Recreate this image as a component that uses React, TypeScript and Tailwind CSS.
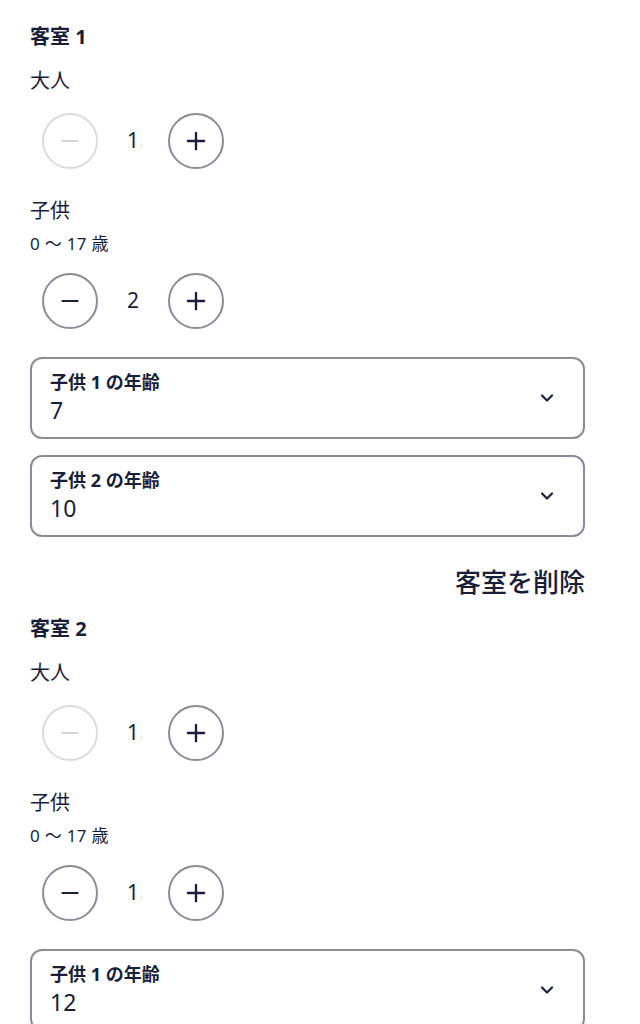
import { Minus, Plus, ChevronDown } from 'lucide-react';

type Room = { id: number; adults: number; children: number[] };

const rooms: Room[] = [
  { id: 1, adults: 1, children: [7, 10] },
  { id: 2, adults: 1, children: [12] },
];

function Stepper({ value, min }: { value: number; min: number }) {
  const disabled = value <= min;
  return (
    <div className="flex items-center pl-[12px] h-[56px]">
      <button
        className={
          disabled
            ? 'w-[56px] h-[56px] rounded-full border-2 border-[#dcdcde] flex items-center justify-center text-[#c9c9cd]'
            : 'w-[56px] h-[56px] rounded-full border-2 border-[#8b8c98] flex items-center justify-center text-[#191e3b]'
        }
      >
        <Minus size={26} strokeWidth={disabled ? 1.6 : 2} />
      </button>
      <span className="w-[70px] text-center text-[21px] text-[#191e3b]">{value}</span>
      <button className="w-[56px] h-[56px] rounded-full border-2 border-[#8b8c98] flex items-center justify-center text-[#191e3b]">
        <Plus size={28} strokeWidth={2} />
      </button>
    </div>
  );
}

function AgeSelect({ index, age }: { index: number; age: number }) {
  return (
    <div className="h-[82px] rounded-[12px] border-2 border-[#8b8c98] flex items-center justify-between pl-[18px] pr-[26px]">
      <div className="flex flex-col">
        <span className="text-[18px] leading-[24px] font-bold text-[#191e3b]">子供 {index} の年齢</span>
        <span className="text-[23px] leading-[32px] text-[#191e3b]">{age}</span>
      </div>
      <ChevronDown size={20} strokeWidth={2.6} className="text-[#191e3b]" />
    </div>
  );
}

function RoomBlock({ room }: { room: Room }) {
  return (
    <div className="flex flex-col">
      <h2 className="text-[20px] leading-[26px] font-bold">客室 {room.id}</h2>
      <div className="mt-[18px] text-[20px] leading-[26px]">大人</div>
      <div className="mt-[19px]">
        <Stepper value={room.adults} min={1} />
      </div>
      <div className="mt-[29px] text-[20px] leading-[26px]">子供</div>
      <div className="mt-[9px] text-[17px] leading-[22px] tracking-[0.3px]">0 ～ 17 歳</div>
      <div className="mt-[18px]">
        <Stepper value={room.children.length} min={0} />
      </div>
      <div className="mt-[28px] flex flex-col gap-[16px]">
        {room.children.map((age, i) => (
          <AgeSelect key={i} index={i + 1} age={age} />
        ))}
      </div>
    </div>
  );
}

export default function App() {
  return (
    <div
      className="w-[640px] min-h-[1024px] bg-white text-[#191e3b] px-[30px] pt-[24px] pr-[55px]"
      style={{ fontFamily: '"Noto Sans", "Noto Sans CJK JP", sans-serif' }}
    >
      <RoomBlock room={rooms[0]} />
      <div className="mt-[30px] flex justify-end">
        <button className="text-[26px] leading-[30px] font-medium text-[#191e3b]">客室を削除</button>
      </div>
      <div className="mt-[19px]">
        <RoomBlock room={rooms[1]} />
      </div>
    </div>
  );
}
